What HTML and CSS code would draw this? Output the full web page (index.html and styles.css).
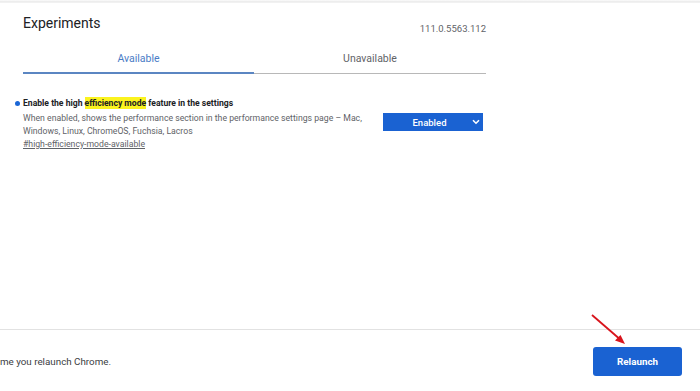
FILE: index.html
```html
<!DOCTYPE html>
<html lang="en">
<head>
<meta charset="utf-8">
<title>Experiments</title>
<link rel="stylesheet" href="styles.css">
</head>
<body>
<div class="page">
  <div class="topline"></div>
  <main class="main">
    <header class="header">
      <h1 class="title">Experiments</h1>
      <span class="version">111.0.5563.112</span>
    </header>
    <nav class="tabs">
      <div class="tab tab-active">Available</div>
      <div class="tab">Unavailable</div>
    </nav>
    <section class="experiment">
      <h2 class="exp-name"><span class="dot"></span>Enable the high <mark class="hl">efficiency mode</mark> feature in the settings</h2>
      <div class="exp-row">
        <div class="exp-text">
          <p class="exp-desc">When enabled, shows the performance section in the performance settings page – Mac, Windows, Linux, ChromeOS, Fuchsia, Lacros</p>
          <a class="exp-link" href="#high-efficiency-mode-available">#high-efficiency-mode-available</a>
        </div>
        <div class="select">
          <span class="select-label">Enabled</span>
          <svg class="chev" width="8" height="6" viewBox="0 0 8 6"><path d="M1 1.2 L4 4.2 L7 1.2" fill="none" stroke="#fff" stroke-width="1.6"/></svg>
        </div>
      </div>
    </section>
  </main>
  <footer class="footer">
    <span class="footer-text">me you relaunch Chrome.</span>
    <button class="relaunch">Relaunch</button>
  </footer>
  <svg class="arrow" width="50" height="45" viewBox="0 0 50 45">
    <line x1="2" y1="2" x2="32" y2="28" stroke="#d8141c" stroke-width="1.8"/>
    <path d="M35 31 L25 27.5 L30.5 22 Z" fill="#d8141c"/>
  </svg>
</div>
</body>
</html>
```

FILE: styles.css
```css
* { box-sizing: border-box; }
html, body { margin: 0; padding: 0; }
body {
  font-family: Roboto, "Noto Sans", Arial, sans-serif;
  background: #fff;
  color: #202124;
  width: 700px;
  height: 391px;
  overflow: hidden;
}
.page {
  position: relative;
  height: 391px;
  display: flex;
  flex-direction: column;
}
.topline {
  height: 3px;
  background: linear-gradient(#ffffff, #ececec 40%, #f3f3f3);
}
.main {
  width: 486px;
  padding-left: 23px;
  flex: 1;
}
.header {
  display: flex;
  justify-content: space-between;
  align-items: flex-start;
  padding-top: 11px;
}
.title {
  margin: 0;
  font-size: 14px;
  line-height: 18px;
  font-weight: 400;
  color: #202124;
}
.version {
  font-size: 9.5px;
  line-height: 14px;
  padding-top: 8px;
  color: #5f6368;
}
.tabs {
  display: grid;
  grid-template-columns: 231px 232px;
  margin-top: 16px;
}
.tab {
  text-align: center;
  font-size: 10.5px;
  line-height: 14px;
  padding-bottom: 7px;
  color: #5f6368;
  border-bottom: 1px solid #b8b8b8;
}
.tab-active {
  color: #4a7cc6;
  padding-bottom: 6px;
  border-bottom: 2px solid #5b86c2;
}
.experiment {
  padding-top: 23px;
}
.exp-name {
  position: relative;
  margin: 0;
  font-size: 8.6px;
  line-height: 12px;
  font-weight: 700;
  color: #202124;
}
.dot {
  position: absolute;
  left: -8px;
  top: 4px;
  width: 5px;
  height: 5px;
  border-radius: 50%;
  background: #1a66d6;
}
.hl {
  background: #fbf31f;
  color: #202124;
  padding: 1px 0;
}
.exp-row {
  display: flex;
  align-items: flex-start;
  justify-content: space-between;
  padding-right: 3px;
}
.exp-text {
  width: 345px;
  padding-top: 3px;
}
.exp-desc {
  margin: 0;
  font-size: 8.7px;
  line-height: 13px;
  color: #5f6368;
}
.exp-link {
  display: block;
  font-size: 8.7px;
  line-height: 13px;
  color: #5f6368;
  text-decoration: underline;
}
.select {
  width: 100px;
  height: 18px;
  margin-top: 4px;
  background: #1a62d2;
  display: flex;
  align-items: center;
  color: #fff;
}
.select-label {
  flex: 1;
  text-align: center;
  font-size: 9.5px;
  font-weight: 500;
  padding-left: 4px;
}
.chev {
  margin-right: 3px;
}
.footer {
  height: 62px;
  border-top: 1px solid #e2e2e2;
  display: flex;
  align-items: center;
  justify-content: space-between;
  padding-right: 18px;
  padding-top: 1px;
}
.footer-text {
  font-size: 9.8px;
  color: #3c4043;
}
.relaunch {
  width: 89px;
  height: 29px;
  border: none;
  border-radius: 3px;
  background: #1a62d2;
  color: #fff;
  font-family: Roboto, "Noto Sans", Arial, sans-serif;
  font-size: 9.8px;
  font-weight: 700;
}
.arrow {
  position: absolute;
  left: 590px;
  top: 313px;
}
```
